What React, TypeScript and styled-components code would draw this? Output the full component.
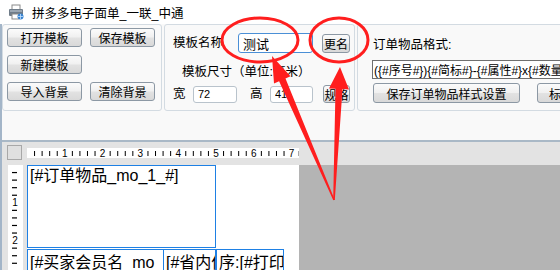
import styled, { createGlobalStyle } from "styled-components";

const GlobalStyle = createGlobalStyle`
  html, body {
    margin: 0;
    padding: 0;
    background: #ffffff;
  }
`;

const UI_FONT = `"Liberation Sans", "Noto Sans CJK SC", sans-serif`;
const UNIT = 37.8;

const Window = styled.div`
  position: relative;
  width: 560px;
  height: 270px;
  overflow: hidden;
  background: #ffffff;
  font-family: ${UI_FONT};
  font-size: 12px;
  color: #000;
`;

const TitleBar = styled.div`
  height: 24px;
  display: flex;
  align-items: center;
  gap: 8px;
  padding-left: 8px;
  box-sizing: border-box;
  font-size: 12.5px;
`;

const Body = styled.div`
  height: 246px;
  display: flex;
  flex-direction: column;
  border-left: 2px solid #a3b5c8;
`;

const Panel = styled.div`
  height: 116px;
  flex-shrink: 0;
  display: flex;
  align-items: flex-start;
  gap: 2px;
  background: #f9f9f9;
`;

const Group = styled.div<{ $w: number; $pad: string }>`
  width: ${(p) => p.$w}px;
  height: 87px;
  flex-shrink: 0;
  box-sizing: border-box;
  border: 1px solid #d3dbe2;
  border-radius: 3px;
  padding: ${(p) => p.$pad};
`;

const ButtonGrid = styled.div`
  display: grid;
  grid-template-columns: 75px 65px;
  grid-auto-rows: 19px;
  column-gap: 8px;
  row-gap: 8px;
`;

const Button = styled.button<{ $w?: number; $h?: number; $ml?: number }>`
  width: ${(p) => (p.$w ? `${p.$w}px` : "100%")};
  height: ${(p) => (p.$h ? `${p.$h}px` : "100%")};
  margin-left: ${(p) => p.$ml || 0}px;
  flex-shrink: 0;
  padding: 0;
  box-sizing: border-box;
  border: 1px solid #8c98a4;
  border-radius: 3px;
  background: linear-gradient(#fbfbfb, #f0f0f0 48%, #e2e2e2 52%, #d9d9d9);
  font-family: ${UI_FONT};
  font-size: 12px;
  color: #000;
  display: flex;
  align-items: center;
  justify-content: center;
  white-space: nowrap;
`;

const Column = styled.div`
  display: flex;
  flex-direction: column;
`;

const Row = styled.div<{ $h: number; $mt?: number; $pl?: number; $gap?: number }>`
  height: ${(p) => p.$h}px;
  margin-top: ${(p) => p.$mt || 0}px;
  padding-left: ${(p) => p.$pl || 0}px;
  display: flex;
  align-items: center;
  gap: ${(p) => p.$gap || 0}px;
  white-space: nowrap;
`;

const Label = styled.span<{ $w?: number; $pl?: number }>`
  width: ${(p) => (p.$w ? `${p.$w}px` : "auto")};
  padding-left: ${(p) => p.$pl || 0}px;
  box-sizing: border-box;
  flex-shrink: 0;
  font-size: 12.5px;
  line-height: 16px;
`;

const TextBox = styled.input<{ $w: number; $h: number; $focus?: boolean; $fs?: number }>`
  width: ${(p) => p.$w}px;
  height: ${(p) => p.$h}px;
  flex-shrink: 0;
  box-sizing: border-box;
  margin: 0;
  padding: 0 4px;
  border: 1px solid ${(p) => (p.$focus ? "#4a8fd6" : "#b9c3cc")};
  border-radius: 3px;
  background: #fff;
  font-family: ${UI_FONT};
  font-size: ${(p) => p.$fs || 11}px;
  color: #000;
  outline: none;
`;

const FormatBox = styled.input`
  width: 240px;
  height: 19px;
  margin: 7px 0 0 0;
  box-sizing: border-box;
  padding: 0 1px;
  border: 1px solid #6f6f6f;
  border-radius: 0;
  background: #fff;
  font-family: ${UI_FONT};
  font-size: 12px;
  color: #000;
  outline: none;
`;

const Designer = styled.div`
  flex: 1;
  display: flex;
  flex-direction: column;
  background: #e3e3e3;
  border-top: 2px solid #a9b8c6;
`;

const RulerRow = styled.div`
  height: 23px;
  flex-shrink: 0;
  display: flex;
  align-items: flex-start;
`;

const Corner = styled.div`
  width: 15px;
  height: 15px;
  margin: 3px 0 0 5px;
  box-sizing: border-box;
  background: #e0e0e0;
  border: 1px solid #a8a8a8;
`;

const HRuler = styled.svg`
  display: block;
  margin: 6px 0 0 5px;
  background: #fff;
`;

const CanvasRow = styled.div`
  flex: 1;
  display: flex;
`;

const VRuler = styled.svg`
  display: block;
  margin-left: 6px;
  background: #fff;
  flex-shrink: 0;
`;

const Canvas = styled.div`
  position: relative;
  width: 272px;
  margin-left: 4px;
  flex-shrink: 0;
  background: #fff;
`;

const Backdrop = styled.div`
  flex: 1;
  background: #b4b4b4;
`;

const Field = styled.div<{ $x: number; $y: number; $w: number; $h: number; $pt: number }>`
  position: absolute;
  left: ${(p) => p.$x}px;
  top: ${(p) => p.$y}px;
  width: ${(p) => p.$w}px;
  height: ${(p) => p.$h}px;
  box-sizing: border-box;
  border: 1px solid #1e80e4;
  padding: ${(p) => p.$pt}px 0 0 2px;
  overflow: hidden;
  white-space: nowrap;
  font-size: 16px;
  line-height: 20px;
`;

const Overlay = styled.svg`
  position: absolute;
  left: 0;
  top: 0;
  pointer-events: none;
`;

const fields = [
  { x: 0, y: 0, w: 189, h: 83, pt: 0, text: "[#订单物品_mo_1_#]" },
  { x: 0, y: 84, w: 137, h: 40, pt: 3, text: "[#买家会员名_mo" },
  { x: 136, y: 84, w: 53, h: 40, pt: 3, text: "[#省内件" },
  { x: 189, y: 84, w: 68, h: 40, pt: 3, text: "序:[#打印" },
];

function PrinterIcon() {
  return (
    <svg width="16" height="16" viewBox="0 0 16 16">
      <rect x="4" y="1" width="8" height="5" fill="#fff" stroke="#8a8a8a" />
      <rect x="1" y="5" width="14" height="7" rx="1" fill="#6f7c89" />
      <rect x="2" y="6" width="12" height="2" fill="#9aa6b2" />
      <rect x="4" y="10" width="7" height="5" fill="#fff" stroke="#8a8a8a" />
      <circle cx="12.5" cy="12.5" r="3" fill="#3a84d0" />
      <path d="M10 12.5h5M12.5 10v5" stroke="#bfe0ff" strokeWidth="0.8" />
    </svg>
  );
}

function HorizontalRuler() {
  const ticks = [];
  for (let i = 1; i <= 36; i++) {
    const x = i * (UNIT / 5);
    if (i % 5 === 0) {
      ticks.push(
        <text key={i} x={x} y={8.5} fontSize="10" textAnchor="middle" fontFamily="Liberation Sans, sans-serif">
          {i / 5}
        </text>
      );
    } else {
      ticks.push(<line key={i} x1={x} x2={x} y1={3} y2={8} stroke="#000" strokeWidth="1" />);
    }
  }
  return (
    <HRuler width="272" height="10" viewBox="0 0 272 10">
      {ticks}
    </HRuler>
  );
}

function VerticalRuler() {
  const ticks = [];
  for (let i = 1; i <= 16; i++) {
    const y = i * (UNIT / 5);
    if (i % 5 === 0) {
      ticks.push(
        <text key={i} x={7} y={y + 3.5} fontSize="10" textAnchor="middle" fontFamily="Liberation Sans, sans-serif">
          {i / 5}
        </text>
      );
    } else {
      ticks.push(<line key={i} x1={4} x2={9} y1={y} y2={y} stroke="#000" strokeWidth="1.2" />);
    }
  }
  return (
    <VRuler width="15" height="105" viewBox="0 0 15 105">
      {ticks}
    </VRuler>
  );
}

type Pt = [number, number];

function arrow(tip: Pt, tail: Pt, headLen: number, headHalf: number, shaftHalf: number, tailHalf: number) {
  const dx = tail[0] - tip[0];
  const dy = tail[1] - tip[1];
  const len = Math.hypot(dx, dy);
  const ux = dx / len;
  const uy = dy / len;
  const px = uy;
  const py = -ux;
  const bx = tip[0] + ux * headLen;
  const by = tip[1] + uy * headLen;
  const pts: Pt[] = [
    tip,
    [bx + px * headHalf, by + py * headHalf],
    [bx + px * shaftHalf, by + py * shaftHalf],
    [tail[0] + px * tailHalf, tail[1] + py * tailHalf],
    [tail[0] - px * tailHalf, tail[1] - py * tailHalf],
    [bx - px * shaftHalf, by - py * shaftHalf],
    [bx - px * headHalf, by - py * headHalf],
  ];
  return pts.map((p) => `${p[0].toFixed(1)},${p[1].toFixed(1)}`).join(" ");
}

export default function App() {
  return (
    <Window>
      <GlobalStyle />
      <TitleBar>
        <PrinterIcon />
        <span>拼多多电子面单_一联_中通</span>
      </TitleBar>
      <Body>
        <Panel>
          <Group $w={160} $pad="3px 0 0 4px">
            <ButtonGrid>
              <Button>打开模板</Button>
              <Button>保存模板</Button>
              <Button>新建模板</Button>
              <span />
              <Button>导入背景</Button>
              <Button>清除背景</Button>
            </ButtonGrid>
          </Group>

          <Group $w={191} $pad="8px 0 0 8px">
            <Column>
              <Row $h={20}>
                <Label $w={65}>模板名称</Label>
                <TextBox $w={75} $h={20} $focus $fs={13} readOnly value="测试" />
                <Button $w={28} $h={19} $ml={9}>
                  更名
                </Button>
              </Row>
              <Row $h={18} $mt={10} $pl={9}>
                <Label>模板尺寸（单位:毫米）</Label>
              </Row>
              <Row $h={18} $mt={4}>
                <Label $w={20}>宽</Label>
                <TextBox $w={44} $h={17} readOnly value="72" />
                <Label $w={33} $pl={13}>
                  高
                </Label>
                <TextBox $w={43} $h={17} readOnly value="41" />
                <Button $w={27} $h={18} $ml={10}>
                  规格
                </Button>
              </Row>
            </Column>
          </Group>

          <Group $w={260} $pad="12px 0 0 14px">
            <Column>
              <Row $h={16} $pl={1}>
                <Label>订单物品格式:</Label>
              </Row>
              <FormatBox readOnly value="({#序号#}){#简标#}-{#属性#}x{#数量#}" />
              <Row $h={20} $mt={4} $gap={17} $pl={1}>
                <Button $w={147} $h={20}>
                  保存订单物品样式设置
                </Button>
                <Button $w={72} $h={20}>
                  标签设置
                </Button>
              </Row>
            </Column>
          </Group>
        </Panel>

        <Designer>
          <RulerRow>
            <Corner />
            <HorizontalRuler />
          </RulerRow>
          <CanvasRow>
            <VerticalRuler />
            <Canvas>
              {fields.map((f) => (
                <Field key={f.text} $x={f.x} $y={f.y} $w={f.w} $h={f.h} $pt={f.pt}>
                  {f.text}
                </Field>
              ))}
            </Canvas>
            <Backdrop />
          </CanvasRow>
        </Designer>
      </Body>

      <Overlay width="560" height="270" viewBox="0 0 560 270">
        <ellipse cx="260" cy="40" rx="38" ry="22" fill="none" stroke="#ff1e1e" strokeWidth="3" />
        <ellipse cx="339" cy="40" rx="29" ry="22" fill="none" stroke="#ff1e1e" strokeWidth="3" />
        <polygon points={arrow([272, 56], [334, 200], 26, 9, 3.5, 0.8)} fill="#ff1e1e" />
        <polygon points={arrow([340, 67], [334, 200], 22, 10, 3.5, 0.8)} fill="#ff1e1e" />
      </Overlay>
    </Window>
  );
}
